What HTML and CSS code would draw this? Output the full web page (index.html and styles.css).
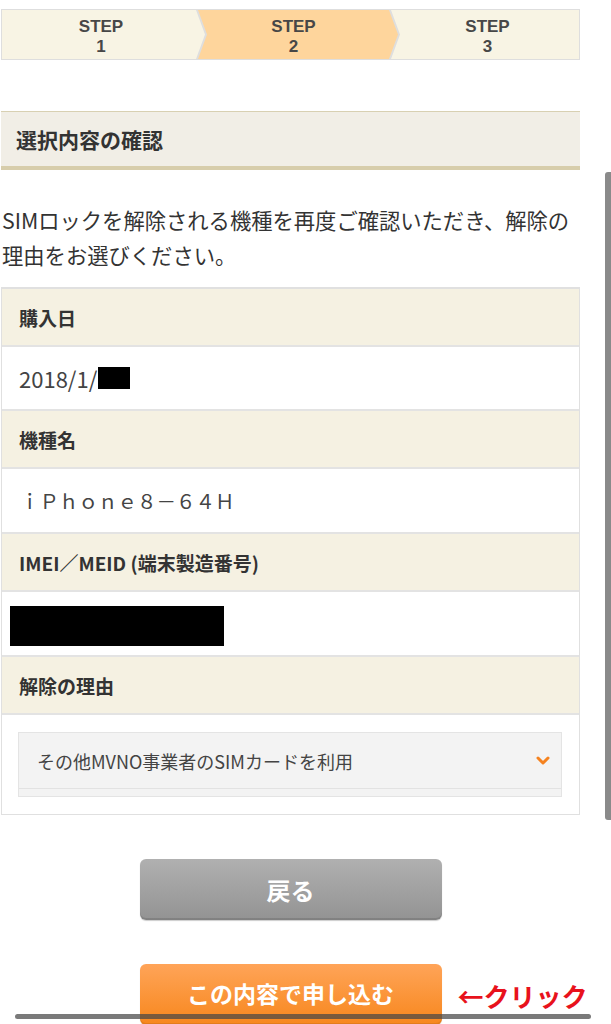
FILE: index.html
```html
<!DOCTYPE html>
<html lang="ja">
<head>
<meta charset="utf-8">
<title>選択内容の確認</title>
<link rel="stylesheet" href="styles.css">
</head>
<body>
<div class="page">
  <div class="steps">
    <div class="step step-first"><span class="st">STEP</span><span class="sn">1</span></div>
    <div class="step step-mid active"><span class="st">STEP</span><span class="sn">2</span></div>
    <div class="step step-last"><span class="st">STEP</span><span class="sn">3</span></div>
  </div>

  <div class="section-head">選択内容の確認</div>

  <p class="lead">SIMロックを解除される機種を再度ご確認いただき、解除の<br>理由をお選びください。</p>

  <div class="table">
    <div class="row head">購入日</div>
    <div class="row val">2018/1/<span class="mask mask-date"></span></div>
    <div class="row head">機種名</div>
    <div class="row val val-model">ｉＰｈｏｎｅ８－６４Ｈ</div>
    <div class="row head">IMEI／MEID (端末製造番号)</div>
    <div class="row val val-imei"><span class="mask mask-imei"></span></div>
    <div class="row head">解除の理由</div>
    <div class="row val val-select">
      <div class="select">
        <div class="select-main">
          <span>その他MVNO事業者のSIMカードを利用</span>
          <svg class="chev" width="14" height="10" viewBox="0 0 14 10"><path d="M2 2 L7 7 L12 2" fill="none" stroke="#f5821f" stroke-width="3" stroke-linecap="round" stroke-linejoin="round"/></svg>
        </div>
        <div class="select-foot"></div>
      </div>
    </div>
  </div>

  <div class="btn-row">
    <span></span>
    <button class="btn btn-back">戻る</button>
    <span></span>
  </div>
  <div class="btn-row btn-row-last">
    <span></span>
    <button class="btn btn-submit">この内容で申し込む</button>
    <span class="note">←クリック</span>
  </div>
</div>
<div class="vscroll"></div>
<div class="hscroll"></div>
</body>
</html>
```

FILE: styles.css
```css
html, body {
  margin: 0;
  padding: 0;
  background: #fff;
}
body {
  font-family: "Noto Sans CJK JP", "Noto Sans", sans-serif;
  color: #333;
  overflow: hidden;
  height: 1024px;
}
.page {
  width: 579px;
  padding-left: 1px;
}

/* steps */
.steps {
  margin-top: 9px;
  height: 49px;
  border: 1px solid #dedede;
  background: #dedede;
  display: flex;
}
.step {
  height: 49px;
  padding-top: 4px;
  display: flex;
  flex-direction: column;
  align-items: center;
  justify-content: center;
  background: #f8f4e4;
  font-family: "Liberation Sans", "Noto Sans", sans-serif;
  font-weight: 700;
  font-size: 17px;
  line-height: 20px;
  color: #474747;
  text-align: center;
  box-sizing: border-box;
}
.st, .sn { display: block; height: 20px; }
.step-first {
  width: 203px;
  padding-right: 5px;
  clip-path: polygon(0 0, calc(100% - 9px) 0, 100% 50%, calc(100% - 9px) 100%, 0 100%);
}
.step-mid {
  width: 200px;
  margin-left: -7px;
  padding-left: 9px;
  padding-right: 18px;
  clip-path: polygon(0 0, calc(100% - 9px) 0, 100% 50%, calc(100% - 9px) 100%, 0 100%, 9px 50%);
}
.step-last {
  flex: 1;
  margin-left: -7px;
  padding-left: 5px;
  clip-path: polygon(0 0, 100% 0, 100% 100%, 0 100%, 9px 50%);
}
.step.active { background: #fed59c; }

/* section head */
.section-head {
  margin-top: 51px;
  height: 54px;
  border-top: 1px solid #d8d0b2;
  border-bottom: 4px solid #d7cdab;
  background: #f1eee6;
  display: flex;
  align-items: center;
  padding-left: 15px;
  font-size: 21px;
  font-weight: 700;
  color: #333;
}

.lead {
  margin: 32px 0 0 1px;
  font-size: 21.3px;
  line-height: 35px;
  color: #333;
  white-space: nowrap;
}

/* table */
.table {
  margin-top: 15px;
  border: 1px solid #e0e0e0;
  border-top-width: 2px;
  display: flex;
  flex-direction: column;
}
.row {
  display: flex;
  align-items: center;
  padding-left: 17px;
  border-top: 2px solid #e3e3e3;
}
.row:first-child { border-top: 0; }
.head {
  height: 56px;
  background: #f5f1e2;
  font-size: 19px;
  font-weight: 700;
  color: #333;
}
.val {
  height: 62px;
  background: #fff;
  font-size: 22px;
  color: #444;
  font-weight: 400;
}
.val-model {
  height: 63px;
  font-size: 19.5px;
  padding-left: 18px;
}
.val-imei {
  height: 63px;
  padding-left: 8px;
  align-items: flex-start;
}
.mask { display: inline-block; background: #000; }
.mask-date { width: 32px; height: 22px; margin-left: 1px; }
.mask-imei { width: 214px; height: 40px; margin-top: 14px; }

.val-select {
  height: auto;
  padding: 17px 17px 17px 16px;
  display: block;
}
.select {
  border: 1px solid #e4e4e4;
  background: #f3f3f3;
}
.select-main {
  height: 55px;
  display: flex;
  align-items: center;
  justify-content: space-between;
  padding: 0 11px 0 18px;
  font-size: 18px;
  color: #444;
  border-bottom: 1px solid #e2e2e2;
}
.chev { display: block; margin-top: 1px; }
.select-foot { height: 7px; }

/* buttons */
.btn-row {
  margin-top: 44px;
  display: grid;
  grid-template-columns: minmax(0, 1fr) 302px minmax(0, 1fr);
  align-items: center;
}
.btn {
  height: 61px;
  border: 0;
  border-radius: 6px;
  font-family: "Noto Sans CJK JP", sans-serif;
  font-weight: 700;
  color: #fff;
  padding: 0;
}
.btn-back {
  font-size: 24px;
  background: linear-gradient(#b0b0b0, #939393);
  box-shadow: inset 0 -2px 0 rgba(0,0,0,0.12), 0 1px 1px rgba(0,0,0,0.2);
}
.btn-submit {
  font-size: 23px;
  padding-bottom: 4px;
  background: linear-gradient(#ffa458, #f7871d);
  box-shadow: inset 0 -2px 0 rgba(0,0,0,0.08), 0 1px 1px rgba(0,0,0,0.15);
}
.note {
  padding-left: 16px;
  padding-top: 2px;
  font-size: 26px;
  font-weight: 700;
  color: #e8121c;
  white-space: nowrap;
}

/* overlay scrollbars */
.vscroll {
  position: fixed;
  left: 605px;
  top: 172px;
  width: 6px;
  height: 648px;
  border-radius: 3px 0 0 3px;
  background: #8a8a8a;
}
.hscroll {
  position: fixed;
  left: 15px;
  top: 1014px;
  width: 576px;
  height: 5px;
  border-radius: 3px;
  background: rgba(70,70,70,0.72);
}
```
